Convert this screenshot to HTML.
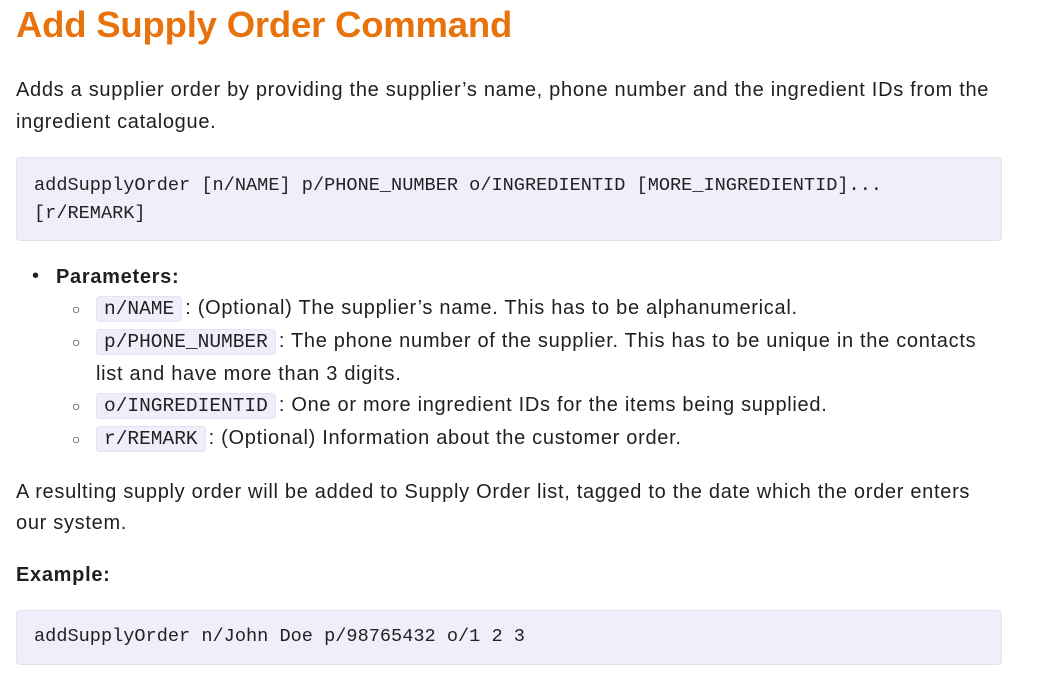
<!DOCTYPE html>
<html><head><style>
body{margin:0;background:#fff;font-family:"Liberation Sans",sans-serif;color:#1f1f1f;font-size:20px;letter-spacing:0.7px;width:1056px;height:676px;overflow:hidden;position:relative}
.a{position:absolute;left:16px;white-space:nowrap}
h1{position:absolute;left:16px;top:4px;margin:0;font-size:36.5px;color:#e8720c;font-weight:bold;letter-spacing:-0.2px}
.pre{position:absolute;left:16px;width:986px;background:#efeffb;border:1px solid #e2e2ef;border-radius:4px;box-sizing:border-box;font-family:"Liberation Mono",monospace;font-size:18.6px;letter-spacing:0;color:#222;padding-left:17px;line-height:28px}
code{font-family:"Liberation Mono",monospace;font-size:19.5px;letter-spacing:0;background:#efeffb;border:1px solid #e4e4f0;border-radius:4px;padding:1px 7px;color:#222;margin-right:3px}
.c{position:absolute;left:72px;font-size:14px}
</style></head><body>
<h1>Add Supply Order Command</h1>
<div class="a" style="top:79px">Adds a supplier order by providing the supplier’s name, phone number and the ingredient IDs from the</div>
<div class="a" style="top:111px">ingredient catalogue.</div>
<div class="pre" style="top:157px;height:84px;padding-top:14px">addSupplyOrder [n/NAME] p/PHONE_NUMBER o/INGREDIENTID [MORE_INGREDIENTID]...<br>[r/REMARK]</div>
<div class="a" style="left:32px;top:265px">•</div>
<div class="a" style="left:56px;top:266px;font-weight:bold">Parameters:</div>
<div class="c" style="top:301px">○</div>
<div class="a" style="left:96px;top:297px"><code>n/NAME</code>: (Optional) The supplier’s name. This has to be alphanumerical.</div>
<div class="c" style="top:334px">○</div>
<div class="a" style="left:96px;top:330px"><code>p/PHONE_NUMBER</code>: The phone number of the supplier. This has to be unique in the contacts</div>
<div class="a" style="left:96px;top:363px">list and have more than 3 digits.</div>
<div class="c" style="top:398px">○</div>
<div class="a" style="left:96px;top:394px"><code>o/INGREDIENTID</code>: One or more ingredient IDs for the items being supplied.</div>
<div class="c" style="top:431px">○</div>
<div class="a" style="left:96px;top:427px"><code>r/REMARK</code>: (Optional) Information about the customer order.</div>
<div class="a" style="top:481px">A resulting supply order will be added to Supply Order list, tagged to the date which the order enters</div>
<div class="a" style="top:512px">our system.</div>
<div class="a" style="top:564px;font-weight:bold">Example:</div>
<div class="pre" style="top:610px;height:55px;padding-top:12px">addSupplyOrder n/John Doe p/98765432 o/1 2 3</div>
</body></html>
